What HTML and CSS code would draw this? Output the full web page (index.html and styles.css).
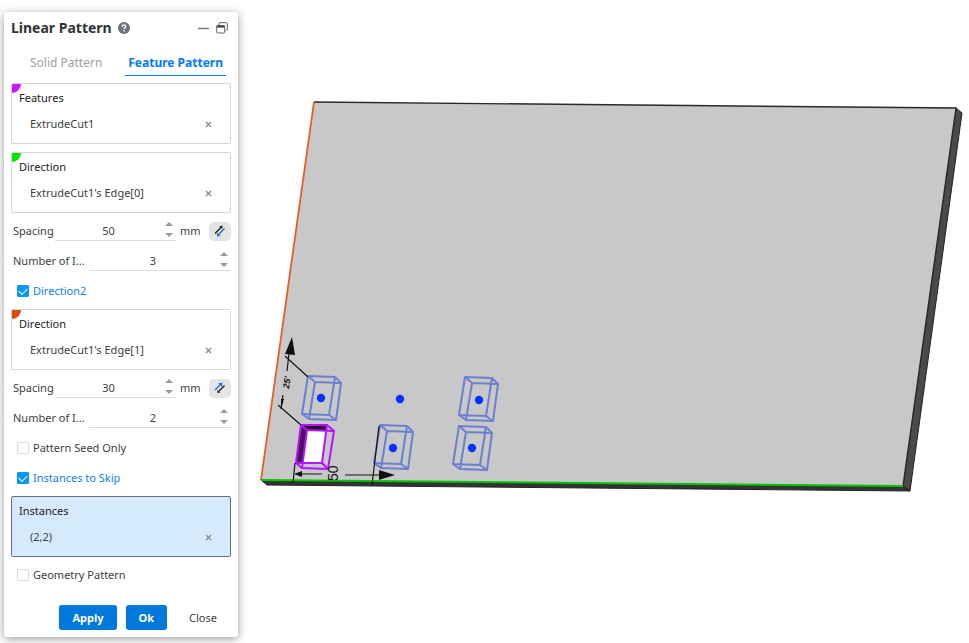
FILE: index.html
```html
<!DOCTYPE html>
<html lang="en">
<head>
<meta charset="utf-8">
<meta name="viewport" content="width=device-width, initial-scale=1">
<title>Linear Pattern</title>
<link rel="stylesheet" href="styles.css">
</head>
<body>
<div class="workspace">
  <form class="panel" aria-labelledby="panel-title">
    <header class="panel-header">
      <h1 class="title" id="panel-title">Linear Pattern</h1>
      <button type="button" class="icon-button help" aria-label="Help">
        <svg width="12" height="12" viewBox="0 0 12 12"><circle cx="6" cy="6" r="6" fill="#6c757d"/><path d="M4.2 4.7C4.2 3.5 5 2.9 6 2.9S7.8 3.6 7.8 4.5C7.8 5.6 6 5.7 6 7" fill="none" stroke="#fff" stroke-width="1.4"/><rect x="5.3" y="8" width="1.5" height="1.4" fill="#fff"/></svg>
      </button>
      <div class="window-actions">
        <button type="button" class="icon-button" aria-label="Minimize">
          <svg width="11" height="12" viewBox="0 0 11 12"><path d="M0 6.5H11" stroke="#777" stroke-width="1.4"/></svg>
        </button>
        <button type="button" class="icon-button" aria-label="Restore">
          <svg width="12" height="12" viewBox="0 0 12 12" fill="none" stroke="#606468"><path d="M3 3V1.5Q3 .7 3.8 .7H10.5Q11.3 .7 11.3 1.5V7.5Q11.3 8.3 10.5 8.3H9.5"/><rect x=".7" y="3.5" width="8" height="7.5" rx="1"/><path d="M.7 4.6H8.7" stroke="#444" stroke-width="2"/></svg>
        </button>
      </div>
    </header>

    <nav class="tabs">
      <button type="button" class="tab">Solid Pattern</button>
      <button type="button" class="tab tab-active">Feature Pattern</button>
    </nav>

    <section class="picker picker-magenta">
      <h2 class="picker-label">Features</h2>
      <div class="picker-item"><span>ExtrudeCut1</span><button type="button" class="remove" aria-label="Remove ExtrudeCut1"><svg width="7" height="7" viewBox="0 0 7 7"><path d="M1 1L6 6M6 1L1 6"/></svg></button></div>
    </section>

    <section class="picker picker-green">
      <h2 class="picker-label">Direction</h2>
      <div class="picker-item"><span>ExtrudeCut1's Edge[0]</span><button type="button" class="remove" aria-label="Remove edge 0"><svg width="7" height="7" viewBox="0 0 7 7"><path d="M1 1L6 6M6 1L1 6"/></svg></button></div>
    </section>

    <div class="rows">
      <div class="row">
        <label class="row-label" for="spacing1">Spacing</label>
        <div class="stepper">
          <input id="spacing1" class="stepper-input" type="text" value="50">
          <div class="stepper-buttons">
            <button type="button" class="step step-up" aria-label="Increase"></button>
            <button type="button" class="step step-down" aria-label="Decrease"></button>
          </div>
        </div>
        <span class="unit">mm</span>
        <button type="button" class="flip" aria-label="Flip direction">
          <svg width="12" height="12" viewBox="0 0 12 12"><path d="M1 8.5L7 2.5" stroke="#222" stroke-width="1.4"/><path d="M8.5 .5L8.2 4L5.2 1.2Z" fill="#222"/><path d="M10.5 3.5L5 9" stroke="#2470d0" stroke-width="1.4"/><path d="M2.8 11.5L3.2 7.4L6.8 10.6Z" fill="#2470d0"/></svg>
        </button>
      </div>
      <div class="row">
        <label class="row-label row-label-long" for="count1">Number of I...</label>
        <div class="stepper">
          <input id="count1" class="stepper-input" type="text" value="3">
          <div class="stepper-buttons">
            <button type="button" class="step step-up" aria-label="Increase"></button>
            <button type="button" class="step step-down" aria-label="Decrease"></button>
          </div>
        </div>
      </div>
      <label class="row check"><input type="checkbox" checked><span>Direction2</span></label>
    </div>

    <section class="picker picker-orange">
      <h2 class="picker-label">Direction</h2>
      <div class="picker-item"><span>ExtrudeCut1's Edge[1]</span><button type="button" class="remove" aria-label="Remove edge 1"><svg width="7" height="7" viewBox="0 0 7 7"><path d="M1 1L6 6M6 1L1 6"/></svg></button></div>
    </section>

    <div class="rows">
      <div class="row">
        <label class="row-label" for="spacing2">Spacing</label>
        <div class="stepper">
          <input id="spacing2" class="stepper-input" type="text" value="30">
          <div class="stepper-buttons">
            <button type="button" class="step step-up" aria-label="Increase"></button>
            <button type="button" class="step step-down" aria-label="Decrease"></button>
          </div>
        </div>
        <span class="unit">mm</span>
        <button type="button" class="flip" aria-label="Flip direction">
          <svg width="12" height="12" viewBox="0 0 12 12"><path d="M1 8L6 3" stroke="#2470d0" stroke-width="1.4"/><path d="M8.5 .5L7.8 4.8L4.2 1.4Z" fill="#2470d0"/><path d="M10.5 3.5L5 9" stroke="#222" stroke-width="1.4"/><path d="M3.2 11L3.7 7.8L6.4 10.4Z" fill="#222"/></svg>
        </button>
      </div>
      <div class="row">
        <label class="row-label row-label-long" for="count2">Number of I...</label>
        <div class="stepper">
          <input id="count2" class="stepper-input" type="text" value="2">
          <div class="stepper-buttons">
            <button type="button" class="step step-up" aria-label="Increase"></button>
            <button type="button" class="step step-down" aria-label="Decrease"></button>
          </div>
        </div>
      </div>
      <label class="row check"><input type="checkbox"><span>Pattern Seed Only</span></label>
      <label class="row check"><input type="checkbox" checked><span>Instances to Skip</span></label>
    </div>

    <section class="picker picker-focus">
      <h2 class="picker-label">Instances</h2>
      <div class="picker-item"><span>(2,2)</span><button type="button" class="remove" aria-label="Remove instance 2,2"><svg width="7" height="7" viewBox="0 0 7 7"><path d="M1 1L6 6M6 1L1 6"/></svg></button></div>
    </section>

    <div class="rows">
      <label class="row check"><input type="checkbox"><span>Geometry Pattern</span></label>
    </div>

    <footer class="actions">
      <button type="button" class="button button-primary">Apply</button>
      <button type="submit" class="button button-primary">Ok</button>
      <button type="button" class="button">Close</button>
    </footer>
  </form>

  <main class="viewport">
    <svg class="model" viewBox="246 0 723 643" role="img" aria-label="Plate with patterned cuts">
      <defs>
        <g id="cell" fill="none" stroke="#6078d2" stroke-width="2" stroke-opacity=".9" stroke-linejoin="round">
          <path d="M7 1L34 2L28 40L1 39ZM14 7L40 8L35 45L8 44ZM7 1L14 7M34 2L40 8M28 40L35 45M1 39L8 44"/>
        </g>
      </defs>
      <path d="M956 108L962 113L910 491L903 486Z" fill="#4a4a4a" stroke="#222" stroke-width="1"/>
      <path d="M261 480L903 486L910 491L267 485Z" fill="#333" stroke="#222" stroke-width="1"/>
      <path d="M314 102L956 108L903 486L261 480Z" fill="#c8c8c8"/>
      <path d="M314 102L956 108L903 486" fill="none" stroke="#292929" stroke-width="1.4"/>
      <path d="M314 102L261 480" stroke="#ee5a20" stroke-width="1.8"/>
      <path d="M261 480L903 486" stroke="#00c800" stroke-width="2"/>

      <use href="#cell" x="301" y="375"/>
      <use href="#cell" x="458" y="376"/>
      <use href="#cell" x="373" y="424"/>
      <use href="#cell" x="452" y="425"/>
      <g fill="#0a32ff">
        <circle cx="321" cy="398" r="4.2"/><circle cx="400" cy="399" r="4.2"/><circle cx="479" cy="400" r="4.2"/>
        <circle cx="393" cy="448" r="4.2"/><circle cx="472" cy="448" r="4.2"/>
      </g>

      <path d="M301 425L327 426L322 464L296 463Z" fill="#fff"/>
      <path d="M301 425L307 431L303 463L296 463Z" fill="#501060"/>
      <path d="M301 425L327 426L326 431L307 431Z" fill="#280830"/>
      <path d="M301 425L327 425L322 463L296 463ZM307 430L334 431L328 469L302 468ZM301 425L307 430M327 425L334 431M322 463L328 469M296 463L302 468" fill="none" stroke="#b414fa" stroke-width="2"/>

      <g fill="none" stroke="#151515" stroke-width="1.2">
        <path d="M285 356L308 377M278 405L301 425M289 353L287 371M283 395L281 409M295 463L293 483M379 426L372 485"/>
        <path d="M300 474L322 474M345 475L380 475"/>
      </g>
      <g fill="#101010">
        <path d="M292 337L295 355L285 354Z"/><path d="M281 409L281 399L284 399Z"/>
        <path d="M395 475L379 480L379 470Z"/><path d="M294 474L302 471L302 477Z"/>
      </g>
      <text class="dimension dimension-small" transform="translate(289 389) rotate(-82)">25'</text>
      <text class="dimension" transform="translate(338 481) rotate(-90)">50</text>
    </svg>
  </main>
</div>
</body>
</html>
```
FILE: styles.css
```css
* { box-sizing: border-box; }

body {
  margin: 0;
  background: #fff;
  color: #3c4043;
  font: 11px/16px "Noto Sans", "Open Sans", sans-serif;
}

button, input { margin: 0; padding: 0; border: 0; background: none; color: inherit; font: inherit; }
svg { display: block; }

.workspace { display: flex; align-items: flex-start; min-height: 100vh; }

.panel {
  flex: none;
  width: 234px;
  margin: 12px 8px 6px 4px;
  padding: 0 7px 7px;
  border-radius: 3px;
  background: #fff;
  box-shadow: 0 2px 10px rgba(0, 0, 0, .4);
}

.panel-header { display: flex; align-items: center; height: 32px; gap: 6px; }
.title { margin: 0; color: #303336; font-size: 14px; font-weight: 700; }
.window-actions { display: flex; gap: 7px; margin-left: auto; padding-right: 3px; }

.tabs { display: flex; justify-content: space-between; height: 32px; margin-bottom: 7px; padding: 0 5px 0 16px; }
.tab { padding: 6px 3px 0; border-bottom: 1px solid transparent; color: #a0a0a0; font-size: 12px; }
.tab-active { border-color: #0078ff; color: #0078ff; font-weight: 700; }

.picker {
  position: relative;
  height: 61px;
  padding: 6px 7px;
  border: 1px solid #d8d4d8;
  border-radius: 2px;
  overflow: hidden;
}
.picker + .picker { margin-top: 8px; }
.picker::before { content: ""; position: absolute; top: 0; left: 0; width: 9px; height: 9px; border-bottom-right-radius: 9px; }
.picker-magenta::before { background: #c31aff; }
.picker-green::before { background: #00e600; }
.picker-orange::before { background: #e04808; }
.picker-focus { border-color: #666e7c; background: #d5e9ff; }
.picker-label { position: relative; margin: 0; color: #202225; font-size: 11px; font-weight: 400; }
.picker-item { display: flex; align-items: center; justify-content: space-between; margin-top: 10px; padding: 0 11px; }
.remove { stroke: #85888c; stroke-width: 1.2; }

.rows { padding: 3px 0; }
.row { display: flex; align-items: center; height: 30px; padding-left: 2px; }
.row-label { flex: none; width: 42px; }
.row-label-long { width: 76px; white-space: nowrap; }
.stepper { display: flex; flex: 1; min-width: 0; height: 20px; border-bottom: 1px solid #d9dade; }
.stepper-input { flex: 1; min-width: 0; text-align: center; }
.stepper-buttons { display: flex; flex: none; flex-direction: column; justify-content: space-between; width: 14px; padding: 1px 3px 3px; }
.step { border: 4px solid transparent; }
.step-up { border-top: 0; border-bottom: 4px solid #999; }
.step-down { border-bottom: 0; border-top: 4px solid #999; }
.unit { flex: none; width: 33px; padding-left: 4px; }
.flip { display: grid; flex: none; place-items: center; width: 22px; height: 19px; border-radius: 5px; background: #e4e4e6; }

.check { gap: 4px; padding-left: 6px; }
.check input { appearance: none; width: 12px; height: 12px; border: 1px solid #dadbe2; border-radius: 1px; }
.check input:checked { border-color: #0a96fa; background: #0a96fa; }
.check input:checked::before {
  content: "";
  display: block;
  width: 7px;
  height: 4px;
  margin: 2px 1px;
  border: solid #fff;
  border-width: 0 0 1px 1px;
  transform: rotate(-45deg);
}
.check:has(:checked) { color: #0a80f8; }

.actions { display: flex; justify-content: flex-end; gap: 9px; padding: 12px 1px 0 0; }
.button { height: 25px; padding: 0 13px; border-radius: 3px; }
.button-primary { background: #0078dc; color: #fff; font-weight: 700; }

.viewport { flex: 1; min-width: 0; }
.model { width: 100%; height: auto; }
.dimension { fill: #151515; font: 14px "Liberation Sans", sans-serif; }
.dimension-small { font-size: 9px; font-style: italic; font-weight: 700; }
```
